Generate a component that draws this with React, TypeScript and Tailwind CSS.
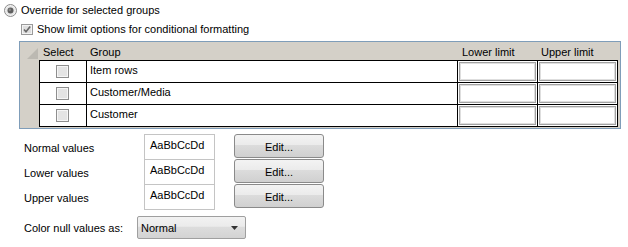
import React from "react";

const groups = ["Item rows", "Customer/Media", "Customer"];
const valueRows = ["Normal values", "Lower values", "Upper values"];

function Radio() {
  return (
    <svg width="13" height="13" viewBox="0 0 13 13" className="shrink-0">
      <circle cx="6.5" cy="6.5" r="6" fill="#f1f1f1" stroke="#8c8c8c" />
      <circle cx="6.5" cy="6.5" r="4.5" fill="#e6e6e6" />
      <circle cx="6.5" cy="6.5" r="3" fill="#5f5f5f" />
      <circle cx="5.8" cy="5.8" r="1.2" fill="#8a8a8a" />
    </svg>
  );
}

function CheckedBox() {
  return (
    <svg width="12" height="11" viewBox="0 0 12 11" className="shrink-0">
      <rect x="0.5" y="0.5" width="11" height="10" fill="#e4e4e4" stroke="#9a9a9a" />
      <rect x="1.5" y="1.5" width="9" height="8" fill="#dedede" stroke="#f3f3f3" />
      <path d="M3 5.5 L5 7.8 L9.2 2.6" fill="none" stroke="#6a6a6a" strokeWidth="1.6" />
    </svg>
  );
}

function EmptyBox() {
  return (
    <div className="h-[13px] w-[13px] border border-[#8e8e8e] bg-[#e4e4e4] shadow-[inset_0_0_0_1px_#f6f6f6]" />
  );
}

function EditButton() {
  return (
    <div className="flex h-[24px] w-[90px] items-center justify-center rounded-[3px] border border-[#8a8a8a] bg-[linear-gradient(#f3f3f3_0%,#ebebeb_45%,#dcdcdc_46%,#d0d0d0_100%)] pt-[2px] text-[11px]">
      Edit...
    </div>
  );
}

export default function App() {
  return (
    <div className="h-[247px] w-[628px] bg-white font-['Liberation_Sans',Arial,sans-serif] text-[11px] leading-[14px] text-black">
      <div className="flex items-center gap-[4px] pl-[4px] pt-[3px]">
        <Radio />
        <span>Override for selected groups</span>
      </div>
      <div className="mt-[5px] flex items-center gap-[4px] pl-[21px]">
        <CheckedBox />
        <span>Show limit options for conditional formatting</span>
      </div>

      <div className="ml-[19px] mt-[5px] h-[88px] w-[602px] border border-[#7f9db9] bg-[#d4d0c8]">
        <div className="flex h-[18px]">
          <div className="flex w-[20px] items-end justify-end pb-[1px] pr-[2px]">
            <svg width="11" height="11" viewBox="0 0 11 11">
              <polygon points="11,0 11,11 0,11" fill="#bcb9b2" />
            </svg>
          </div>
          <div className="w-[47px] pl-[3px] pt-[3px]">Select</div>
          <div className="w-[371px] pl-[3px] pt-[3px]">Group</div>
          <div className="w-[80px] pl-[4px] pt-[3px]">Lower limit</div>
          <div className="w-[80px] pl-[3px] pt-[3px]">Upper limit</div>
        </div>
        <div className="flex">
          <div className="w-[19px]" />
          <div className="border-l border-t border-black bg-white">
            {groups.map((g) => (
              <div key={g} className="flex h-[22px] border-b border-black">
                <div className="flex w-[47px] items-center justify-center border-r border-black pr-[2px]">
                  <EmptyBox />
                </div>
                <div className="w-[371px] border-r border-black pl-[3px] pt-[2px]">{g}</div>
                <div className="w-[80px] border-r border-black p-[1px]">
                  <div className="h-full w-full border border-[#a3a3a3] bg-white shadow-[inset_0_0_0_1px_#dedede]" />
                </div>
                <div className="w-[80px] border-r border-black p-[1px]">
                  <div className="h-full w-full border border-[#a3a3a3] bg-white shadow-[inset_0_0_0_1px_#dedede]" />
                </div>
              </div>
            ))}
          </div>
        </div>
      </div>

      <div className="mt-[5px] flex pl-[24px]">
        <div className="flex w-[120px] flex-col">
          {valueRows.map((v) => (
            <div key={v} className="flex h-[25px] items-center pt-[2px]">
              {v}
            </div>
          ))}
        </div>
        <div className="w-[71px] border border-[#c4c4c4] bg-white">
          {valueRows.map((v, i) => (
            <div
              key={v}
              className={
                i < 2
                  ? "h-[25px] border-b border-[#c4c4c4] pl-[5px] pt-[3px]"
                  : "h-[24px] pl-[5px] pt-[3px]"
              }
            >
              AaBbCcDd
            </div>
          ))}
        </div>
        <div className="ml-[19px] flex flex-col gap-[1px]">
          {valueRows.map((v) => (
            <EditButton key={v} />
          ))}
        </div>
      </div>

      <div className="mt-[6px] flex items-center pl-[24px]">
        <div className="w-[113px]">Color null values as:</div>
        <div className="flex h-[23px] w-[109px] items-center justify-between rounded-[2px] border border-[#9f9f9f] bg-[linear-gradient(#f2f2f2_0%,#ebebeb_45%,#dddddd_46%,#d3d3d3_100%)] pl-[3px] pr-[7px]">
          <span>Normal</span>
          <svg width="7" height="4" viewBox="0 0 7 4">
            <polygon points="0,0 7,0 3.5,4" fill="#333" />
          </svg>
        </div>
      </div>
    </div>
  );
}
